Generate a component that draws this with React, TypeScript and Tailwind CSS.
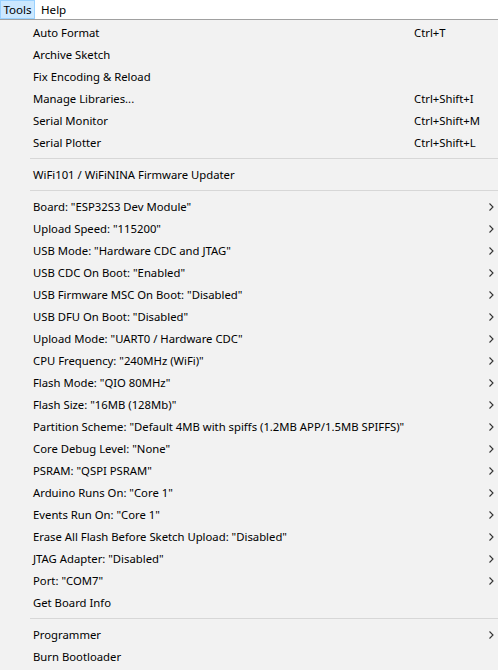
import React from "react";

type Entry =
  | { kind: "item"; label: string; shortcut?: string; sub?: boolean }
  | { kind: "sep" };

const entries: Entry[] = [
  { kind: "item", label: "Auto Format", shortcut: "Ctrl+T" },
  { kind: "item", label: "Archive Sketch" },
  { kind: "item", label: "Fix Encoding & Reload" },
  { kind: "item", label: "Manage Libraries...", shortcut: "Ctrl+Shift+I" },
  { kind: "item", label: "Serial Monitor", shortcut: "Ctrl+Shift+M" },
  { kind: "item", label: "Serial Plotter", shortcut: "Ctrl+Shift+L" },
  { kind: "sep" },
  { kind: "item", label: "WiFi101 / WiFiNINA Firmware Updater" },
  { kind: "sep" },
  { kind: "item", label: 'Board: "ESP32S3 Dev Module"', sub: true },
  { kind: "item", label: 'Upload Speed: "115200"', sub: true },
  { kind: "item", label: 'USB Mode: "Hardware CDC and JTAG"', sub: true },
  { kind: "item", label: 'USB CDC On Boot: "Enabled"', sub: true },
  { kind: "item", label: 'USB Firmware MSC On Boot: "Disabled"', sub: true },
  { kind: "item", label: 'USB DFU On Boot: "Disabled"', sub: true },
  { kind: "item", label: 'Upload Mode: "UART0 / Hardware CDC"', sub: true },
  { kind: "item", label: 'CPU Frequency: "240MHz (WiFi)"', sub: true },
  { kind: "item", label: 'Flash Mode: "QIO 80MHz"', sub: true },
  { kind: "item", label: 'Flash Size: "16MB (128Mb)"', sub: true },
  {
    kind: "item",
    label: 'Partition Scheme: "Default 4MB with spiffs (1.2MB APP/1.5MB SPIFFS)"',
    sub: true,
  },
  { kind: "item", label: 'Core Debug Level: "None"', sub: true },
  { kind: "item", label: 'PSRAM: "QSPI PSRAM"', sub: true },
  { kind: "item", label: 'Arduino Runs On: "Core 1"', sub: true },
  { kind: "item", label: 'Events Run On: "Core 1"', sub: true },
  { kind: "item", label: 'Erase All Flash Before Sketch Upload: "Disabled"', sub: true },
  { kind: "item", label: 'JTAG Adapter: "Disabled"', sub: true },
  { kind: "item", label: 'Port: "COM7"', sub: true },
  { kind: "item", label: "Get Board Info" },
  { kind: "sep" },
  { kind: "item", label: "Programmer", sub: true },
  { kind: "item", label: "Burn Bootloader" },
];

function Chevron() {
  return (
    <svg width="5" height="8" viewBox="0 0 5 8" className="block">
      <path d="M0.5 0.5 L4 4 L0.5 7.5" fill="none" stroke="#333" strokeWidth="1.1" />
    </svg>
  );
}

export default function App() {
  return (
    <div
      className="w-[498px] h-[670px] overflow-hidden bg-[#f2f2f2] text-[11.3px] text-black"
      style={{ fontFamily: '"Segoe UI", "Noto Sans", sans-serif' }}
    >
      {/* menu bar */}
      <div className="h-[19px] bg-white flex items-stretch text-[11.6px]">
        <div className="w-[35px] bg-[#cce8ff] border border-[#99d1ff] flex items-center justify-center leading-none">
          Tools
        </div>
        <div className="px-[6px] flex items-center leading-none">Help</div>
      </div>
      {/* dropdown */}
      <div className="border-t border-[#a0a0a0] pt-[2px] flex flex-col">
        {entries.map((e, i) =>
          e.kind === "sep" ? (
            <div key={i} className="h-[10px] pt-[4px] pl-[30px]">
              <div className="h-px w-full bg-[#d7d7d7]" />
            </div>
          ) : (
            <div key={i} className="h-[22px] flex items-center pl-[33px] pr-[4px]">
              <span className="flex-1 whitespace-nowrap">{e.label}</span>
              {e.shortcut && <span className="w-[80px] whitespace-nowrap">{e.shortcut}</span>}
              {e.sub && (
                <span className="w-[6px] flex justify-center">
                  <Chevron />
                </span>
              )}
            </div>
          )
        )}
      </div>
    </div>
  );
}
